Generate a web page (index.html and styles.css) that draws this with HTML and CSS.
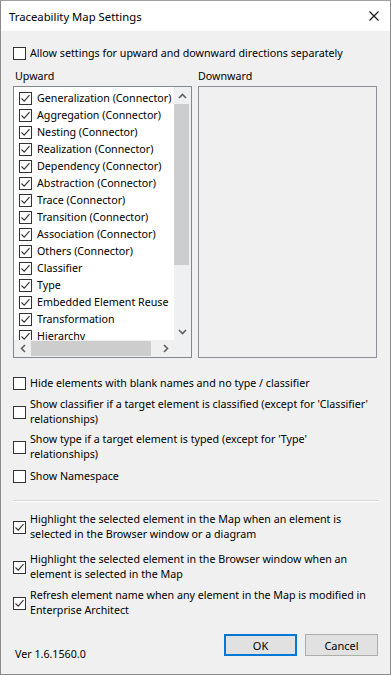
FILE: index.html
```html
<!DOCTYPE html>
<html>
<head>
<meta charset="utf-8">
<link rel="stylesheet" href="styles.css">
</head>
<body>
<div class="window">
  <div class="titlebar">
    <span class="title">Traceability Map Settings</span>
    <svg class="close" width="10" height="10" viewBox="0 0 10 10"><path d="M0.5 0.5 L9.5 9.5 M9.5 0.5 L0.5 9.5" stroke="#111" stroke-width="1.1" fill="none"/></svg>
  </div>
  <div class="content">
    <label class="opt single top-opt"><span class="cb"></span><span class="txt">Allow settings for upward and downward directions separately</span></label>

    <div class="lists">
      <div class="col col-up">
        <div class="lbl">Upward</div>
        <div class="listbox">
          <div class="viewport">
            <div class="item"><span class="cb on"><svg viewBox="0 0 11 11"><path d="M1.5 5.5 L4.2 8.2 L9.5 2.2"/></svg></span><span class="itxt">Generalization (Connector)</span></div>
            <div class="item"><span class="cb on"><svg viewBox="0 0 11 11"><path d="M1.5 5.5 L4.2 8.2 L9.5 2.2"/></svg></span><span class="itxt">Aggregation (Connector)</span></div>
            <div class="item"><span class="cb on"><svg viewBox="0 0 11 11"><path d="M1.5 5.5 L4.2 8.2 L9.5 2.2"/></svg></span><span class="itxt">Nesting (Connector)</span></div>
            <div class="item"><span class="cb on"><svg viewBox="0 0 11 11"><path d="M1.5 5.5 L4.2 8.2 L9.5 2.2"/></svg></span><span class="itxt">Realization (Connector)</span></div>
            <div class="item"><span class="cb on"><svg viewBox="0 0 11 11"><path d="M1.5 5.5 L4.2 8.2 L9.5 2.2"/></svg></span><span class="itxt">Dependency (Connector)</span></div>
            <div class="item"><span class="cb on"><svg viewBox="0 0 11 11"><path d="M1.5 5.5 L4.2 8.2 L9.5 2.2"/></svg></span><span class="itxt">Abstraction (Connector)</span></div>
            <div class="item"><span class="cb on"><svg viewBox="0 0 11 11"><path d="M1.5 5.5 L4.2 8.2 L9.5 2.2"/></svg></span><span class="itxt">Trace (Connector)</span></div>
            <div class="item"><span class="cb on"><svg viewBox="0 0 11 11"><path d="M1.5 5.5 L4.2 8.2 L9.5 2.2"/></svg></span><span class="itxt">Transition (Connector)</span></div>
            <div class="item"><span class="cb on"><svg viewBox="0 0 11 11"><path d="M1.5 5.5 L4.2 8.2 L9.5 2.2"/></svg></span><span class="itxt">Association (Connector)</span></div>
            <div class="item"><span class="cb on"><svg viewBox="0 0 11 11"><path d="M1.5 5.5 L4.2 8.2 L9.5 2.2"/></svg></span><span class="itxt">Others (Connector)</span></div>
            <div class="item"><span class="cb on"><svg viewBox="0 0 11 11"><path d="M1.5 5.5 L4.2 8.2 L9.5 2.2"/></svg></span><span class="itxt">Classifier</span></div>
            <div class="item"><span class="cb on"><svg viewBox="0 0 11 11"><path d="M1.5 5.5 L4.2 8.2 L9.5 2.2"/></svg></span><span class="itxt">Type</span></div>
            <div class="item"><span class="cb on"><svg viewBox="0 0 11 11"><path d="M1.5 5.5 L4.2 8.2 L9.5 2.2"/></svg></span><span class="itxt">Embedded Element Reuse</span></div>
            <div class="item"><span class="cb on"><svg viewBox="0 0 11 11"><path d="M1.5 5.5 L4.2 8.2 L9.5 2.2"/></svg></span><span class="itxt">Transformation</span></div>
            <div class="item"><span class="cb on"><svg viewBox="0 0 11 11"><path d="M1.5 5.5 L4.2 8.2 L9.5 2.2"/></svg></span><span class="itxt">Hierarchy</span></div>
          </div>
          <div class="vscroll">
            <div class="sbtn"><svg width="9" height="6" viewBox="0 0 9 6"><path d="M1 5 L4.5 1.5 L8 5" stroke="#606060" stroke-width="1.6" fill="none"/></svg></div>
            <div class="vthumb"></div>
            <div class="vrest"></div>
            <div class="sbtn"><svg width="9" height="6" viewBox="0 0 9 6"><path d="M1 1 L4.5 4.5 L8 1" stroke="#606060" stroke-width="1.6" fill="none"/></svg></div>
          </div>
          <div class="hscroll">
            <div class="hbtn"><svg width="6" height="9" viewBox="0 0 6 9"><path d="M5 1 L1.5 4.5 L5 8" stroke="#606060" stroke-width="1.6" fill="none"/></svg></div>
            <div class="hthumb"></div>
            <div class="hrest"></div>
            <div class="hbtn"><svg width="6" height="9" viewBox="0 0 6 9"><path d="M1 1 L4.5 4.5 L1 8" stroke="#606060" stroke-width="1.6" fill="none"/></svg></div>
          </div>
          <div class="corner"></div>
        </div>
      </div>
      <div class="col col-down">
        <div class="lbl lbl-down">Downward</div>
        <div class="downbox"></div>
      </div>
    </div>

    <div class="opts">
      <label class="opt single o-hide"><span class="cb"></span><span class="txt">Hide elements with blank names and no type / classifier</span></label>
      <label class="opt"><span class="cb"></span><span class="txt">Show classifier if a target element is classified (except for 'Classifier' relationships)</span></label>
      <label class="opt"><span class="cb"></span><span class="txt">Show type if a target element is typed (except for 'Type' relationships)</span></label>
      <label class="opt single o-ns"><span class="cb"></span><span class="txt">Show Namespace</span></label>
    </div>

    <div class="sep"></div>

    <div class="opts opts2">
      <label class="opt"><span class="cb on"><svg viewBox="0 0 11 11"><path d="M1.5 5.5 L4.2 8.2 L9.5 2.2"/></svg></span><span class="txt">Highlight the selected element in the Map when an element is selected in the Browser window or a diagram</span></label>
      <label class="opt"><span class="cb on"><svg viewBox="0 0 11 11"><path d="M1.5 5.5 L4.2 8.2 L9.5 2.2"/></svg></span><span class="txt">Highlight the selected element in the Browser window when an element is selected in the Map</span></label>
      <label class="opt o-refresh"><span class="cb on"><svg viewBox="0 0 11 11"><path d="M1.5 5.5 L4.2 8.2 L9.5 2.2"/></svg></span><span class="txt">Refresh element name when any element in the Map is modified in Enterprise Architect</span></label>
    </div>

    <div class="footer">
      <span class="ver">Ver 1.6.1560.0</span>
      <div class="buttons">
        <button class="btn default">OK</button>
        <button class="btn">Cancel</button>
      </div>
    </div>
  </div>
</div>
</body>
</html>
```
FILE: styles.css
```css
* { box-sizing: border-box; }
html, body { margin: 0; padding: 0; }
body {
  font-family: "Noto Sans", "Open Sans", sans-serif;
  font-size: 10.7px;
  color: #000;
  background: #f0f0f0;
}
.window {
  width: 391px;
  height: 675px;
  background: #f0f0f0;
  border: 1px solid #8a8a8a;
  border-top-color: #a0a0a0;
  display: flex;
  flex-direction: column;
}
.titlebar {
  height: 30px;
  background: #fff;
  display: flex;
  align-items: center;
  justify-content: space-between;
  padding: 0 11px 0 8px;
  flex: none;
}
.title { font-size: 11.3px; color: #000; }
.close { display: block; }
.content {
  padding: 0 12px 0 12px;
  display: flex;
  flex-direction: column;
  flex: 1;
}
.opt {
  display: flex;
  align-items: center;
  gap: 4px;
  line-height: 15px;
}
.opts .opt { padding-right: 7px; }
.opt .txt { flex: 1; }
.cb {
  width: 13px;
  height: 13px;
  border: 1px solid #333;
  background: #fff;
  flex: none;
  display: flex;
  align-items: center;
  justify-content: center;
}
.cb svg { width: 11px; height: 11px; display: block; }
.cb svg path { stroke: #333; stroke-width: 1.1; fill: none; }
.top-opt { margin-top: 15px; }

.lists {
  display: flex;
  gap: 6px;
  margin-top: 8px;
}
.col { display: flex; flex-direction: column; }
.col-up { width: 179px; }
.col-down { width: 179px; }
.lbl { height: 17px; line-height: 15px; padding-left: 2px; }
.lbl-down { padding-left: 0; }
.listbox {
  height: 272px;
  border: 1px solid #828790;
  background: #fff;
  display: grid;
  grid-template-columns: 160px 17px;
  grid-template-rows: 253px 17px;
}
.viewport {
  overflow: hidden;
  padding: 3px 0 0 5px;
}
.item {
  height: 17px;
  display: flex;
  align-items: center;
  gap: 5px;
  white-space: nowrap;
}
.itxt { line-height: 17px; }
.vscroll {
  background: #f0f0f0;
  display: flex;
  flex-direction: column;
}
.sbtn { height: 17px; flex: none; display: flex; align-items: center; justify-content: center; }
.vthumb { height: 161px; background: #cdcdcd; margin: 0 2px 0 0; flex: none; }
.vrest { flex: 1; }
.hscroll {
  background: #f0f0f0;
  display: flex;
}
.hbtn { width: 17px; flex: none; display: flex; align-items: center; justify-content: center; }
.hthumb { width: 120px; background: #cdcdcd; margin: 1px 0 1px 0; flex: none; }
.hrest { flex: 1; }
.corner { background: #f0f0f0; }
.downbox {
  height: 272px;
  border: 1px solid #8c9096;
  background: #f0f0f0;
}

.opts { display: flex; flex-direction: column; margin-top: 18px; gap: 5px; }
.o-hide { margin-bottom: 1px; }
.o-ns { margin-top: 2px; }
.sep {
  margin-top: 16px;
  height: 2px;
  border-top: 1px solid #d8d8d8;
  border-bottom: 1px solid #fff;
}
.opts2 { margin-top: 10px; gap: 10px; }
.o-refresh { margin-top: -4px; }
.footer {
  margin-top: auto;
  margin-bottom: 13px;
  display: flex;
  align-items: center;
  justify-content: space-between;
}
.ver { padding-left: 2px; padding-top: 18px; }
.buttons { display: flex; gap: 8px; }
.btn {
  width: 73px;
  height: 22px;
  font-family: "Noto Sans", "Open Sans", sans-serif;
  font-size: 11px;
  color: #000;
  background: #e1e1e1;
  border: 1px solid #adadad;
  padding: 0;
}
.btn.default { border: 2px solid #0078d7; }
```
